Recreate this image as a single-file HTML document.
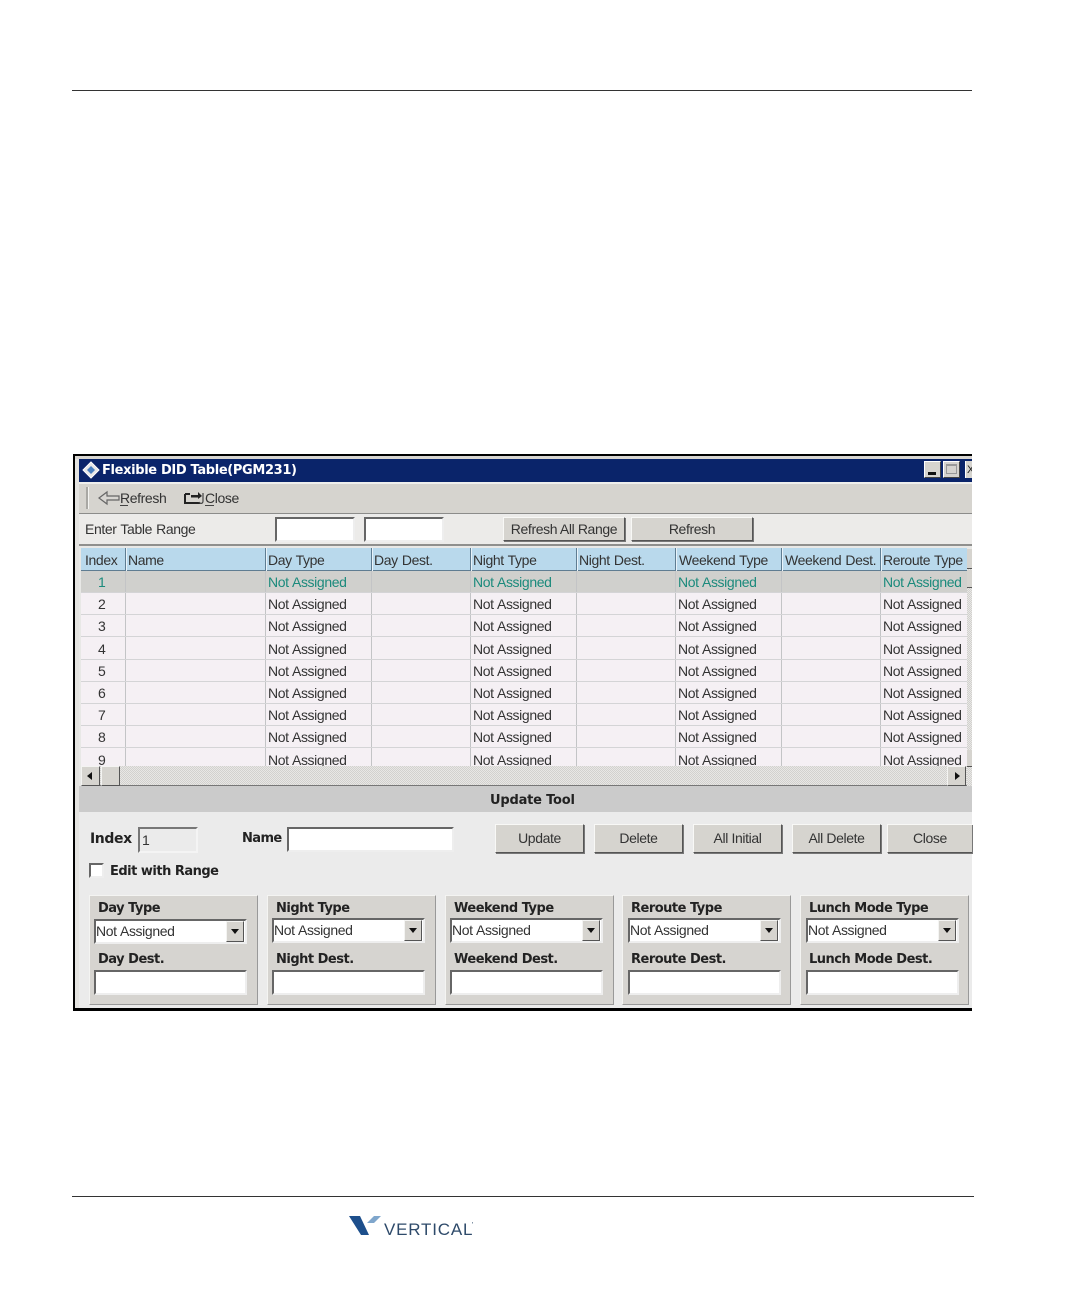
<!DOCTYPE html>
<html><head><meta charset="utf-8">
<style>
html,body{margin:0;padding:0;background:#fff}
#p{position:relative;width:1080px;height:1296px;overflow:hidden;background:#fff;font-family:"Liberation Sans",sans-serif;font-size:14px;color:#333;filter:blur(.35px)}
#p div,#p span,#p svg{position:absolute;display:block;box-sizing:border-box}
.t{white-space:nowrap;line-height:16px;height:16px;letter-spacing:-.38px;word-spacing:.6px}
.t.b{font-family:"DejaVu Sans",sans-serif;font-weight:bold;font-size:13px;color:#222;letter-spacing:-.5px;word-spacing:0}
.btn{background:#d6d4cf;border:1px solid;border-color:#f8f8f6 #555 #555 #f8f8f6;box-shadow:1px 1px 0 #777;text-align:center;color:#333;white-space:nowrap;font-size:14px;letter-spacing:-.38px}
.in{background:#fff;border:2px solid;border-color:#666 #eee #eee #666}
.grp{background:#d6d4d0;border:1px solid;border-color:#f4f4f2 #999 #999 #f4f4f2;top:895px;height:110px;width:169px}
.sep{background:#c3c4c6;width:1px;top:571px;height:195px}
.hsep{background:#5f7d92;width:1px;top:548px;height:23px;box-shadow:1px 0 0 #e8f3fa}
.hl{background:#d4d4d6;left:81px;width:886px;height:1px}
.ar{background:#d6d4cf;border:1px solid;border-color:#f4f4f2 #555 #555 #f4f4f2;width:19px;height:20px}
.ar svg{left:4px;top:5px}
.dith{background-color:#e8e7e5;background-image:conic-gradient(#d2d1ce 25%,transparent 0 50%,#d2d1ce 0 75%,transparent 0);background-size:2px 2px}
</style></head><body>
<div id="p">
<div style="left:72px;top:90px;width:900px;height:1px;background:#333"></div>
<div style="left:72px;top:1196px;width:902px;height:1px;background:#333"></div>

<div id="w" style="left:73px;top:454px;width:899px;height:557px;background:#000;overflow:hidden">
<div style="left:2px;top:2px;width:897px;height:552px;background:#ebebeb;overflow:hidden">
<div style="left:0;top:0;width:4px;height:552px;background:#e4e3e0"></div>
<div style="left:0;top:0;width:897px;height:3px;background:#d8d6d2"></div>
</div>
</div>

<!-- title -->
<div style="left:79px;top:459px;width:893px;height:23px;background:#0a246a"></div>
<svg style="left:82px;top:461px" width="18" height="18" viewBox="0 0 18 18"><path d="M9 1L17 9L9 17L1 9Z" fill="#e8e8e8" stroke="#fff"/><path d="M9 5L13 9L9 13L5 9Z" fill="#4a80c0"/></svg>
<div class="t b" style="left:102px;top:463px;color:#fff;letter-spacing:-.35px">Flexible DID Table(PGM231)</div>
<div style="left:924px;top:461px;width:17px;height:17px;background:#d6d4cf;border:1px solid;border-color:#fff #444 #444 #fff"></div>
<div style="left:928px;top:472px;width:8px;height:3px;background:#111"></div>
<div style="left:943px;top:461px;width:17px;height:17px;background:#d6d4cf;border:1px solid;border-color:#fff #444 #444 #fff"></div>
<div style="left:946px;top:464px;width:11px;height:10px;border:1px solid #999;border-top-width:2px"></div>
<div style="left:965px;top:461px;width:7px;height:17px;background:#d6d4cf;border-left:1px solid #fff"></div>
<div class="t" style="left:967px;top:462px;font-size:11px;color:#222;width:5px;overflow:hidden">X</div>

<!-- toolbar -->
<div style="left:79px;top:482px;width:893px;height:32px;background:#d6d4cf;border-top:2px solid #efefed;border-bottom:1px solid #8c8c8a"></div>
<div style="left:86px;top:487px;width:2px;height:22px;background:#a9a8a4;box-shadow:1px 0 0 #f4f4f2"></div>
<svg style="left:98px;top:490px" width="22" height="16" viewBox="0 0 22 16"><path d="M21 6H9V2L1 8L9 14V10H21Z" fill="#d8d6d2" stroke="#666" stroke-width="1.200"/></svg>
<div class="t" style="left:120px;top:490px">Refresh</div>
<div style="left:120px;top:505px;width:8px;height:1px;background:#444"></div>
<svg style="left:184px;top:490px" width="22" height="16" viewBox="0 0 22 16"><path d="M7 5H14V2L18 6L14 9V7.500H7Z" fill="#222"/><path d="M1 4V13H16" fill="none" stroke="#222" stroke-width="2"/><path d="M1 4H6" stroke="#222" stroke-width="2"/><path d="M19 3V11C19 14 16 14 15 12" fill="none" stroke="#444" stroke-width="1.200"/></svg>
<div class="t" style="left:205px;top:490px">Close</div>
<div style="left:205px;top:505px;width:9px;height:1px;background:#444"></div>

<!-- range row -->
<div style="left:79px;top:515px;width:893px;height:31px;background:#ecebe9;border-bottom:2px solid #8f8f8d"></div>
<div class="t" style="left:85px;top:521px">Enter Table Range</div>
<div class="in" style="left:275px;top:517px;width:80px;height:25px"></div>
<div class="in" style="left:364px;top:517px;width:80px;height:25px"></div>
<div class="btn" style="left:503px;top:517px;width:122px;height:24px;line-height:22px">Refresh All Range</div>
<div class="btn" style="left:631px;top:517px;width:122px;height:24px;line-height:22px">Refresh</div>

<!-- table -->
<div style="left:79px;top:546px;width:893px;height:240px;background:#e8e8e6"></div>
<div style="left:81px;top:548px;width:886px;height:23px;background:#b9d9ec;border-bottom:1px solid #5f7d92"></div>
<div style="left:81px;top:571px;width:886px;height:195px;background:#f5f0f4"></div>
<div style="left:81px;top:571px;width:886px;height:21px;background:#d0d0cd"></div>
<div class="hsep" style="left:125px"></div><div class="hsep" style="left:265px"></div><div class="hsep" style="left:371px"></div><div class="hsep" style="left:470px"></div><div class="hsep" style="left:576px"></div><div class="hsep" style="left:675px"></div><div class="hsep" style="left:781px"></div><div class="hsep" style="left:880px"></div>
<div class="sep" style="left:125px"></div><div class="sep" style="left:265px"></div><div class="sep" style="left:371px"></div><div class="sep" style="left:470px"></div><div class="sep" style="left:576px"></div><div class="sep" style="left:675px"></div><div class="sep" style="left:781px"></div><div class="sep" style="left:880px"></div>
<div class="hl" style="top:592px"></div><div class="hl" style="top:614px"></div><div class="hl" style="top:636px"></div><div class="hl" style="top:659px"></div><div class="hl" style="top:681px"></div><div class="hl" style="top:703px"></div><div class="hl" style="top:725px"></div><div class="hl" style="top:747px"></div>

<div class="t" style="left:85px;top:552px">Index</div>
<div class="t" style="left:128px;top:552px">Name</div>
<div class="t" style="left:268px;top:552px">Day Type</div>
<div class="t" style="left:374px;top:552px">Day Dest.</div>
<div class="t" style="left:473px;top:552px">Night Type</div>
<div class="t" style="left:579px;top:552px">Night Dest.</div>
<div class="t" style="left:679px;top:552px">Weekend Type</div>
<div class="t" style="left:785px;top:552px">Weekend Dest.</div>
<div class="t" style="left:883px;top:552px">Reroute Type</div>

<div style="left:81px;top:571px;width:886px;height:195px;overflow:hidden">
<div class="t" style="left:17px;top:3px;color:#1b8a7c">1</div><div class="t" style="left:187px;top:3px;color:#1b8a7c">Not Assigned</div><div class="t" style="left:392px;top:3px;color:#1b8a7c">Not Assigned</div><div class="t" style="left:597px;top:3px;color:#1b8a7c">Not Assigned</div><div class="t" style="left:802px;top:3px;color:#1b8a7c">Not Assigned</div>
<div class="t" style="left:17px;top:25px">2</div><div class="t" style="left:187px;top:25px">Not Assigned</div><div class="t" style="left:392px;top:25px">Not Assigned</div><div class="t" style="left:597px;top:25px">Not Assigned</div><div class="t" style="left:802px;top:25px">Not Assigned</div>
<div class="t" style="left:17px;top:47px">3</div><div class="t" style="left:187px;top:47px">Not Assigned</div><div class="t" style="left:392px;top:47px">Not Assigned</div><div class="t" style="left:597px;top:47px">Not Assigned</div><div class="t" style="left:802px;top:47px">Not Assigned</div>
<div class="t" style="left:17px;top:70px">4</div><div class="t" style="left:187px;top:70px">Not Assigned</div><div class="t" style="left:392px;top:70px">Not Assigned</div><div class="t" style="left:597px;top:70px">Not Assigned</div><div class="t" style="left:802px;top:70px">Not Assigned</div>
<div class="t" style="left:17px;top:92px">5</div><div class="t" style="left:187px;top:92px">Not Assigned</div><div class="t" style="left:392px;top:92px">Not Assigned</div><div class="t" style="left:597px;top:92px">Not Assigned</div><div class="t" style="left:802px;top:92px">Not Assigned</div>
<div class="t" style="left:17px;top:114px">6</div><div class="t" style="left:187px;top:114px">Not Assigned</div><div class="t" style="left:392px;top:114px">Not Assigned</div><div class="t" style="left:597px;top:114px">Not Assigned</div><div class="t" style="left:802px;top:114px">Not Assigned</div>
<div class="t" style="left:17px;top:136px">7</div><div class="t" style="left:187px;top:136px">Not Assigned</div><div class="t" style="left:392px;top:136px">Not Assigned</div><div class="t" style="left:597px;top:136px">Not Assigned</div><div class="t" style="left:802px;top:136px">Not Assigned</div>
<div class="t" style="left:17px;top:158px">8</div><div class="t" style="left:187px;top:158px">Not Assigned</div><div class="t" style="left:392px;top:158px">Not Assigned</div><div class="t" style="left:597px;top:158px">Not Assigned</div><div class="t" style="left:802px;top:158px">Not Assigned</div>
<div class="t" style="left:17px;top:181px">9</div><div class="t" style="left:187px;top:181px">Not Assigned</div><div class="t" style="left:392px;top:181px">Not Assigned</div><div class="t" style="left:597px;top:181px">Not Assigned</div><div class="t" style="left:802px;top:181px">Not Assigned</div>
</div>

<!-- vertical scrollbar pieces -->
<div class="dith" style="left:967px;top:549px;width:5px;height:237px"></div>
<div style="left:967px;top:549px;width:5px;height:20px;background:#d6d4cf;border-bottom:1px solid #555"></div>
<div style="left:967px;top:570px;width:5px;height:18px;background:#d6d4cf;border-bottom:1px solid #555"></div>
<div style="left:967px;top:750px;width:5px;height:17px;background:#d6d4cf;border-bottom:1px solid #555"></div>

<!-- horizontal scrollbar -->
<div class="dith" style="left:81px;top:766px;width:886px;height:20px;border-bottom:1px solid #777"></div>
<div class="ar" style="left:81px;top:766px"><svg width="9" height="9" viewBox="0 0 9 9"><path d="M6 0V8L1 4Z" fill="#111"/></svg></div>
<div class="ar" style="left:101px;top:766px"></div>
<div class="ar" style="left:947px;top:766px"><svg width="9" height="9" viewBox="0 0 9 9"><path d="M3 0V8L8 4Z" fill="#111"/></svg></div>

<!-- update tool band -->
<div style="left:79px;top:786px;width:893px;height:26px;background:#cbcbcb"></div>
<div class="t b" style="left:490px;top:793px;letter-spacing:-.2px">Update Tool</div>

<div class="t b" style="left:90px;top:831px;font-size:14px;letter-spacing:-.4px">Index</div>
<div class="in" style="left:138px;top:827px;width:60px;height:26px;background:#ebebeb;border-color:#777 #f4f4f4 #f4f4f4 #777"></div>
<div class="t" style="left:142px;top:832px">1</div>
<div class="t b" style="left:242px;top:831px;letter-spacing:-.6px">Name</div>
<div class="in" style="left:287px;top:827px;width:167px;height:25px"></div>
<div class="btn" style="left:495px;top:824px;width:89px;height:29px;line-height:27px">Update</div>
<div class="btn" style="left:594px;top:824px;width:89px;height:29px;line-height:27px">Delete</div>
<div class="btn" style="left:693px;top:824px;width:89px;height:29px;line-height:27px">All Initial</div>
<div class="btn" style="left:792px;top:824px;width:89px;height:29px;line-height:27px">All Delete</div>
<div class="btn" style="left:887px;top:824px;width:85px;height:29px;line-height:27px;border-right:0">Close</div>
<div style="left:89px;top:863px;width:15px;height:15px;background:#fff;border:2px solid;border-color:#666 #eee #eee #666"></div>
<div class="t b" style="left:110px;top:864px">Edit with Range</div>

<!-- groups -->
<div class="grp" style="left:89px"></div>
<div class="grp" style="left:267px"></div>
<div class="grp" style="left:445px"></div>
<div class="grp" style="left:622px"></div>
<div class="grp" style="left:800px"></div>

<div class="t b" style="left:98px;top:901px">Day Type</div>
<div class="t b" style="left:276px;top:901px">Night Type</div>
<div class="t b" style="left:454px;top:901px">Weekend Type</div>
<div class="t b" style="left:631px;top:901px">Reroute Type</div>
<div class="t b" style="left:809px;top:901px">Lunch Mode Type</div>
<div class="t b" style="left:98px;top:952px">Day Dest.</div>
<div class="t b" style="left:276px;top:952px">Night Dest.</div>
<div class="t b" style="left:454px;top:952px">Weekend Dest.</div>
<div class="t b" style="left:631px;top:952px">Reroute Dest.</div>
<div class="t b" style="left:809px;top:952px">Lunch Mode Dest.</div>

<div class="in" style="left:94px;top:919px;width:153px;height:25px"></div>
<div class="t" style="left:96px;top:923px">Not Assigned</div>
<div class="ar" style="left:226px;top:921px;width:18px;height:21px"><svg width="9" height="9" viewBox="0 0 9 9"><path d="M0 2H8L4 7Z" fill="#111"/></svg></div>
<div class="in" style="left:272px;top:918px;width:153px;height:25px"></div>
<div class="t" style="left:274px;top:922px">Not Assigned</div>
<div class="ar" style="left:404px;top:920px;width:18px;height:21px"><svg width="9" height="9" viewBox="0 0 9 9"><path d="M0 2H8L4 7Z" fill="#111"/></svg></div>
<div class="in" style="left:450px;top:918px;width:153px;height:25px"></div>
<div class="t" style="left:452px;top:922px">Not Assigned</div>
<div class="ar" style="left:582px;top:920px;width:18px;height:21px"><svg width="9" height="9" viewBox="0 0 9 9"><path d="M0 2H8L4 7Z" fill="#111"/></svg></div>
<div class="in" style="left:628px;top:918px;width:153px;height:25px"></div>
<div class="t" style="left:630px;top:922px">Not Assigned</div>
<div class="ar" style="left:760px;top:920px;width:18px;height:21px"><svg width="9" height="9" viewBox="0 0 9 9"><path d="M0 2H8L4 7Z" fill="#111"/></svg></div>
<div class="in" style="left:806px;top:918px;width:153px;height:25px"></div>
<div class="t" style="left:808px;top:922px">Not Assigned</div>
<div class="ar" style="left:938px;top:920px;width:18px;height:21px"><svg width="9" height="9" viewBox="0 0 9 9"><path d="M0 2H8L4 7Z" fill="#111"/></svg></div>

<div class="in" style="left:94px;top:970px;width:153px;height:25px"></div>
<div class="in" style="left:272px;top:970px;width:153px;height:25px"></div>
<div class="in" style="left:450px;top:970px;width:153px;height:25px"></div>
<div class="in" style="left:628px;top:970px;width:153px;height:25px"></div>
<div class="in" style="left:806px;top:970px;width:153px;height:25px"></div>

<!-- logo -->
<svg style="left:348px;top:1215px" width="34" height="22" viewBox="0 0 34 22"><path d="M1 1H12L21 20H13Z" fill="#1d4f8c"/><path d="M19 8L26 1H33L26 8Z" fill="#7fa6cc"/></svg>
<div class="t" style="left:384px;top:1222px;font-size:17px;color:#2e4a6a;letter-spacing:.8px">VERTICAL</div>
<div class="t" style="left:472px;top:1218px;font-size:7px;color:#2e4a6a;letter-spacing:0">'</div>
</div>
</body></html>
